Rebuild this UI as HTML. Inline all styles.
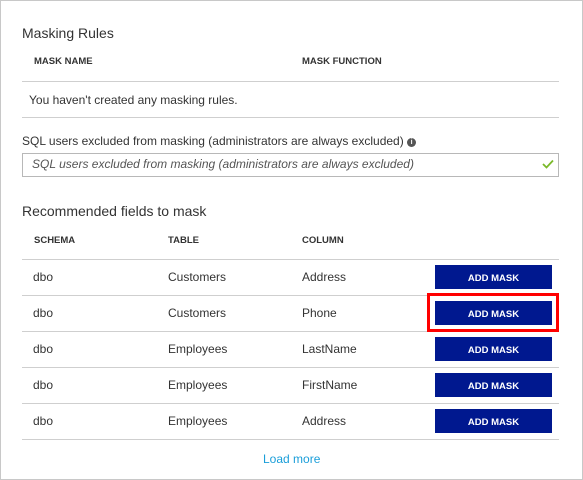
<!DOCTYPE html>
<html><head><style>
body{margin:0;width:583px;height:480px;overflow:hidden;background:#fff;font-family:"Segoe UI","Liberation Sans",sans-serif;color:#333;}
.frame{position:absolute;left:0;top:0;width:581px;height:478px;border:1px solid #c8c8c8;}
.t{position:absolute;white-space:nowrap;font-size:12px;}
.h{font-size:14px;color:#333;}
.hd{font-size:9.5px;font-weight:bold;color:#333;}
.line{position:absolute;left:22px;width:537px;height:1px;background:#cfcfcf;}
.btn{position:absolute;left:435px;width:117px;height:24px;background:#00188f;color:#fff;font-size:9.5px;font-weight:bold;display:flex;align-items:center;justify-content:center;}
.btn span{position:relative;top:1px}
</style></head><body>
<div class="frame"></div>
<div class="t h" style="left:22px;top:25px">Masking Rules</div>
<div class="t hd" style="left:34px;top:56px">MASK NAME</div>
<div class="t hd" style="left:302px;top:56px">MASK FUNCTION</div>
<div class="line" style="top:81px"></div>
<div class="t" style="left:29px;top:93px">You haven't created any masking rules.</div>
<div class="line" style="top:117px"></div>
<div class="t" style="left:22px;top:134px">SQL users excluded from masking (administrators are always excluded) <span style="display:inline-block;width:9px;height:9px;border-radius:50%;background:#555;color:#fff;font-size:7px;line-height:9px;text-align:center;font-weight:bold;vertical-align:1px">i</span></div>
<div style="position:absolute;left:22px;top:153px;width:535px;height:22px;border:1px solid #b8b8b8"></div>
<div class="t" style="left:32px;top:157px;font-style:italic;color:#555">SQL users excluded from masking (administrators are always excluded)</div>
<svg style="position:absolute;left:542px;top:159px" width="12" height="10"><path d="M1 5 L4.5 8.5 L11 1.5" stroke="#7ab929" stroke-width="1.8" fill="none"/></svg>
<div class="t h" style="left:22px;top:203px">Recommended fields to mask</div>
<div class="t hd" style="left:34px;top:235px">SCHEMA</div>
<div class="t hd" style="left:168px;top:235px">TABLE</div>
<div class="t hd" style="left:302px;top:235px">COLUMN</div>
<div class="line" style="top:259px"></div>
<div class="line" style="top:295px"></div>
<div class="line" style="top:331px"></div>
<div class="line" style="top:367px"></div>
<div class="line" style="top:403px"></div>
<div class="line" style="top:439px"></div>
<div class="t" style="left:33px;top:270px">dbo</div><div class="t" style="left:168px;top:270px">Customers</div><div class="t" style="left:302px;top:270px">Address</div>
<div class="t" style="left:33px;top:306px">dbo</div><div class="t" style="left:168px;top:306px">Customers</div><div class="t" style="left:302px;top:306px">Phone</div>
<div class="t" style="left:33px;top:342px">dbo</div><div class="t" style="left:168px;top:342px">Employees</div><div class="t" style="left:302px;top:342px">LastName</div>
<div class="t" style="left:33px;top:378px">dbo</div><div class="t" style="left:168px;top:378px">Employees</div><div class="t" style="left:302px;top:378px">FirstName</div>
<div class="t" style="left:33px;top:414px">dbo</div><div class="t" style="left:168px;top:414px">Employees</div><div class="t" style="left:302px;top:414px">Address</div>
<div class="btn" style="top:265px"><span>ADD MASK</span></div>
<div class="btn" style="top:301px"><span>ADD MASK</span></div>
<div class="btn" style="top:337px"><span>ADD MASK</span></div>
<div class="btn" style="top:373px"><span>ADD MASK</span></div>
<div class="btn" style="top:409px"><span>ADD MASK</span></div>
<div style="position:absolute;left:427px;top:293px;width:126px;height:33px;border:3px solid #f00"></div>
<div class="t" style="left:263px;top:452px;color:#1a9ed9">Load more</div>
</body></html>
